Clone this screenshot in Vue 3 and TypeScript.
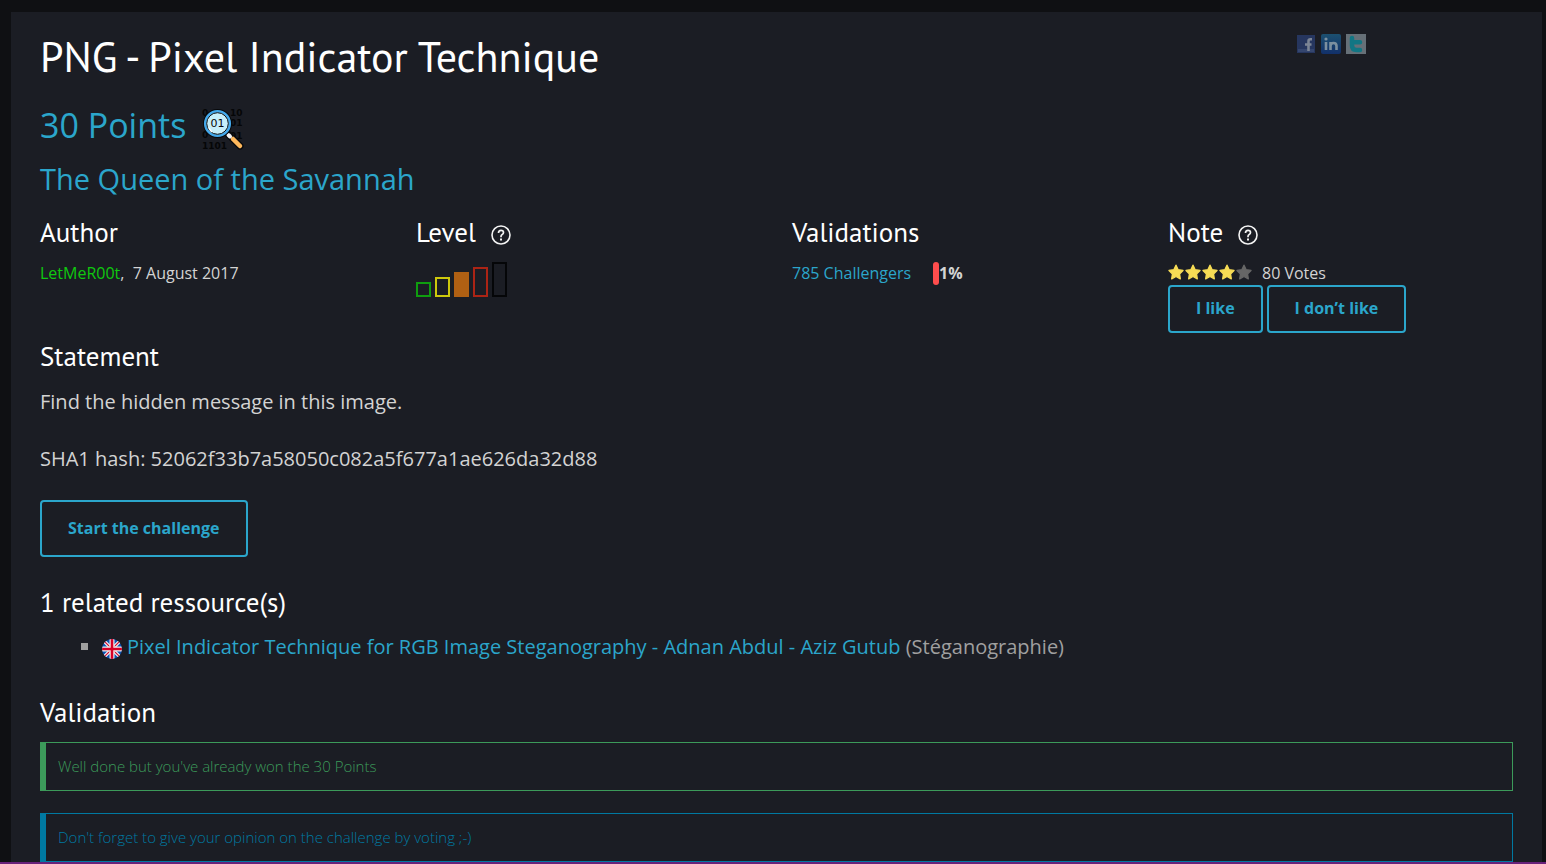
<script setup lang="ts">
interface LevelBar {
  name: string
  height: number
  active: boolean
}

const levels: LevelBar[] = [
  { name: 'very-easy', height: 15, active: false },
  { name: 'easy', height: 20, active: false },
  { name: 'medium', height: 25, active: true },
  { name: 'hard', height: 30, active: false },
  { name: 'very-hard', height: 35, active: false },
]

const rating = 4
const stars = [1, 2, 3, 4, 5]
</script>

<template>
  <div class="page">
    <main class="panel">
      <header class="top">
        <h1>PNG - Pixel Indicator Technique</h1>
        <nav class="social" aria-label="Share">
          <a href="#" aria-label="Facebook">
            <svg width="20" height="20" viewBox="0 0 20 20">
              <rect x="1" y="1" width="18" height="18" fill="#26365f" />
              <rect x="2" y="15" width="16" height="3" fill="#35466f" />
              <path d="M16 5.300h-1.500q-2 0-2 2V17M9 10.500h6.500" fill="none" stroke="#7c8595" stroke-width="2.600" />
            </svg>
          </a>
          <a href="#" aria-label="LinkedIn">
            <svg width="20" height="20" viewBox="0 0 20 20">
              <defs>
                <linearGradient id="li" x1="0" y1="0" x2="0" y2="1">
                  <stop offset="0" stop-color="#1c5070" />
                  <stop offset="1" stop-color="#12306a" />
                </linearGradient>
              </defs>
              <rect width="20" height="20" rx="2" fill="url(#li)" />
              <path d="M5 8v8M9.500 8v8M9.500 12q0-3 3-3t3 3v4" fill="none" stroke="#7b8f9f" stroke-width="2.600" />
              <circle cx="5" cy="5" r="1.600" fill="#7b8f9f" />
            </svg>
          </a>
          <a href="#" aria-label="Twitter">
            <svg width="20" height="20" viewBox="0 0 20 20">
              <rect width="20" height="20" fill="#667078" />
              <path d="M6 4v7.500q0 4.500 4.500 4.500H14M6 8.300h8" fill="none" stroke="#127684" stroke-width="4.500" stroke-linecap="round" />
            </svg>
          </a>
        </nav>
      </header>

      <div class="points">
        <h2>30 Points</h2>
        <svg class="category" width="42" height="42" viewBox="0 0 42 42" role="img" aria-label="Steganography">
          <g class="bits" fill="#050607">
            <text x="0" y="8">0</text>
            <text x="28" y="8">10</text>
            <text x="28" y="18">01</text>
            <text x="0" y="30">0</text>
            <text x="28" y="31">01</text>
            <text x="0" y="41">1101</text>
          </g>
          <path d="M26 26l12 12" stroke="#08090b" stroke-width="7" stroke-linecap="round" />
          <path d="M31 31l7 7" stroke="#ffb85c" stroke-width="4.500" stroke-linecap="round" />
          <path d="M26.500 27l1.500 1.500" stroke="#f5f5f5" stroke-width="4" stroke-linecap="round" />
          <circle cx="15.500" cy="15.500" r="14.500" fill="#08090b" />
          <circle cx="15.500" cy="15.500" r="12.300" fill="#c7effa" stroke="#43a9ec" stroke-width="2.500" />
          <circle cx="15.500" cy="15.500" r="10.800" fill="none" stroke="#08090b" stroke-width="1" />
          <path d="M7 20q1 2.500 3 4" fill="none" stroke="#ffffff" stroke-width="1.500" />
          <text class="lens" x="15.500" y="19" text-anchor="middle" fill="#08090b">01</text>
        </svg>
      </div>
      <h3 class="subtitle">The Queen of the Savannah</h3>

      <div class="facts">
        <section>
          <h4>Author</h4>
          <p class="small"><a class="author" href="#">LetMeR00t</a>,&nbsp; 7 August 2017</p>
        </section>

        <section>
          <h4>
            Level
            <a class="help" href="#" aria-label="About levels">
              <svg width="20" height="20" viewBox="0 0 20 20" fill="none" stroke="#f4f4f4">
                <circle cx="10" cy="10" r="9" stroke-width="1.600" />
                <path d="M7.500 8q0-2.700 2.500-2.700t2.500 2.300q0 1.300-1.300 2T10 11.700v.6" stroke-width="1.700" />
                <path d="M10 13.500v2" stroke-width="2" />
              </svg>
            </a>
          </h4>
          <div class="levels">
            <span
              v-for="level in levels"
              :key="level.name"
              class="bar"
              :class="[level.name, { active: level.active }]"
              :style="{ height: level.height + 'px' }"
            ></span>
          </div>
        </section>

        <section>
          <h4>Validations</h4>
          <div class="validations">
            <a href="#">785 Challengers</a>
            <span class="ratio"><i class="gauge"></i><b>1%</b></span>
          </div>
        </section>

        <section>
          <h4>
            Note
            <a class="help" href="#" aria-label="About notes">
              <svg width="20" height="20" viewBox="0 0 20 20" fill="none" stroke="#f4f4f4">
                <circle cx="10" cy="10" r="9" stroke-width="1.600" />
                <path d="M7.500 8q0-2.700 2.500-2.700t2.500 2.300q0 1.300-1.300 2T10 11.700v.6" stroke-width="1.700" />
                <path d="M10 13.500v2" stroke-width="2" />
              </svg>
            </a>
          </h4>
          <div class="votes">
            <span class="stars">
              <svg
                v-for="star in stars"
                :key="star"
                width="17"
                height="17"
                viewBox="0 0 17 17"
                :class="{ on: star <= rating }"
              >
                <path
                  d="M8 1.200l2.100 4.500 4.900.7-3.500 3.500.8 4.900L8 12.500l-4.300 2.300.8-4.900L1 6.400l4.900-.7z"
                  stroke-width="1.400"
                  stroke-linejoin="round"
                />
              </svg>
            </span>
            80 Votes
          </div>
          <div class="vote-buttons">
            <button type="button">I like</button>
            <button type="button">I don’t like</button>
          </div>
        </section>
      </div>

      <section class="statement">
        <h4>Statement</h4>
        <p>Find the hidden message in this image.</p>
        <p>SHA1 hash: 52062f33b7a58050c082a5f677a1ae626da32d88</p>
        <button class="start" type="button">Start the challenge</button>
      </section>

      <section class="resources">
        <h4>1 related ressource(s)</h4>
        <ul>
          <li>
            <svg width="20" height="20" viewBox="0 0 20 20" role="img" aria-label="English">
              <defs>
                <clipPath id="round"><circle cx="10" cy="10" r="10" /></clipPath>
              </defs>
              <g clip-path="url(#round)">
                <rect width="20" height="20" fill="#0b52b4" />
                <path d="M0 0l20 20M20 0L0 20" stroke="#f0f0f0" stroke-width="3.400" />
                <path d="M0 0l20 20M20 0L0 20" stroke="#d80027" stroke-width="1.100" />
                <path d="M10 0v20M0 10h20" stroke="#f0f0f0" stroke-width="5" />
                <path d="M10 0v20M0 10h20" stroke="#d80027" stroke-width="2.600" />
              </g>
            </svg>
            <span>
              <a href="#">Pixel Indicator Technique for RGB Image Steganography - Adnan Abdul - Aziz Gutub</a>
              (Stéganographie)
            </span>
          </li>
        </ul>
      </section>

      <section>
        <h4>Validation</h4>
        <p class="message success">Well done but you've already won the 30 Points</p>
        <p class="message info">Don't forget to give your opinion on the challenge by voting ;-)</p>
      </section>
    </main>
    <div class="edge"></div>
  </div>
</template>

<style>
body {
  margin: 0;
  background: #0f1013;
}
</style>

<style scoped>
.page {
  display: flex;
  flex-direction: column;
  box-sizing: border-box;
  min-height: 100vh;
  padding-top: 12px;
  font-family: "Open Sans", "Noto Sans", sans-serif;
  font-size: 16px;
  line-height: 24px;
  color: #d3d3d3;
}
.panel {
  flex: 1;
  margin: 0 4px 0 11px;
  padding: 15px 29px 0;
  background: #1b1d24;
}
.edge {
  height: 2px;
  background: #68217a;
}
h1,
h2,
h3,
h4,
p,
ul {
  margin: 0;
  padding: 0;
  font-weight: 400;
}
a {
  color: #2ba6cb;
  text-decoration: none;
}
.top {
  display: flex;
  justify-content: space-between;
}
h1 {
  font-family: "PT Sans", Lato, sans-serif;
  font-size: 42px;
  line-height: 60px;
  color: #fff;
}
.social {
  display: flex;
  gap: 5px;
  width: 217px;
  padding-top: 7px;
}
.social svg,
.category,
.help svg,
li svg {
  display: block;
}
.points {
  display: flex;
  gap: 16px;
  margin-top: 14px;
}
h2 {
  font-size: 34px;
  line-height: 48px;
  color: #2ba6cb;
}
.category {
  margin-top: 7px;
  overflow: visible;
}
.bits {
  font: 700 9px "DejaVu Sans", sans-serif;
}
.lens {
  font: 400 11px "DejaVu Sans", sans-serif;
}
.subtitle {
  margin-top: 8px;
  font-size: 29px;
  line-height: 42px;
  color: #2ba6cb;
}
.facts {
  display: grid;
  grid-template-columns: repeat(4, 1fr);
  column-gap: 31px;
  margin-top: 13px;
}
h4 {
  display: flex;
  gap: 15px;
  font-family: "PT Sans", Lato, sans-serif;
  font-size: 27px;
  line-height: 38px;
  color: #fff;
}
.help {
  margin-top: 12px;
}
.small,
.validations,
.votes {
  margin-top: 10px;
}
.author {
  color: #0fc80f;
}
.levels {
  display: flex;
  align-items: flex-end;
  gap: 4px;
  height: 35px;
  margin-top: 11px;
}
.bar {
  box-sizing: border-box;
  width: 15px;
  border: 2px solid;
}
.very-easy {
  color: #0f9d0f;
}
.easy {
  color: #cdc80c;
}
.medium {
  color: #b06013;
}
.hard {
  color: #ac2415;
}
.very-hard {
  color: #050608;
}
.active {
  background: currentColor;
}
.validations {
  display: flex;
  gap: 22px;
}
.ratio {
  display: flex;
}
.gauge {
  width: 6px;
  height: 23px;
  margin-top: 1px;
  border-radius: 3px;
  background: #ff4d4d;
}
.votes {
  display: flex;
  gap: 9px;
}
.stars {
  display: flex;
  padding-top: 3px;
}
.stars svg {
  fill: #666;
  stroke: #666;
}
.stars .on {
  fill: #f7dc55;
  stroke: #f7dc55;
}
.vote-buttons {
  display: flex;
  gap: 4px;
}
button {
  height: 48px;
  padding: 0 26px 2px;
  border: 2px solid #2ba6cb;
  border-radius: 4px;
  background: transparent;
  font: 700 16px/24px "Open Sans", "Noto Sans", sans-serif;
  color: #2ba6cb;
  cursor: pointer;
}
.statement {
  margin-top: 4px;
}
.statement p {
  margin-top: 13px;
  font-size: 20px;
  line-height: 28px;
}
.statement p + p {
  margin-top: 29px;
}
.start {
  height: 57px;
  margin-top: 27px;
}
.resources {
  margin: 26px 0 32px;
}
ul {
  margin: 12px 0 0 62px;
  list-style: none;
}
li {
  display: flex;
  position: relative;
  gap: 5px;
  font-size: 20px;
  line-height: 28px;
  color: #a0a0a0;
}
li::before {
  content: "";
  position: absolute;
  left: -21px;
  top: 10px;
  width: 7px;
  height: 7px;
  background: #a0a0a0;
}
li svg {
  margin-top: 6px;
}
.message {
  margin-top: 11px;
  padding: 11px 12px 12px;
  border: 1px solid;
  border-left-width: 6px;
  font-size: 15px;
  font-weight: 350;
}
.message + .message {
  margin-top: 22px;
}
.success {
  color: #3c9a5a;
}
.info {
  color: #0079a1;
}
</style>
